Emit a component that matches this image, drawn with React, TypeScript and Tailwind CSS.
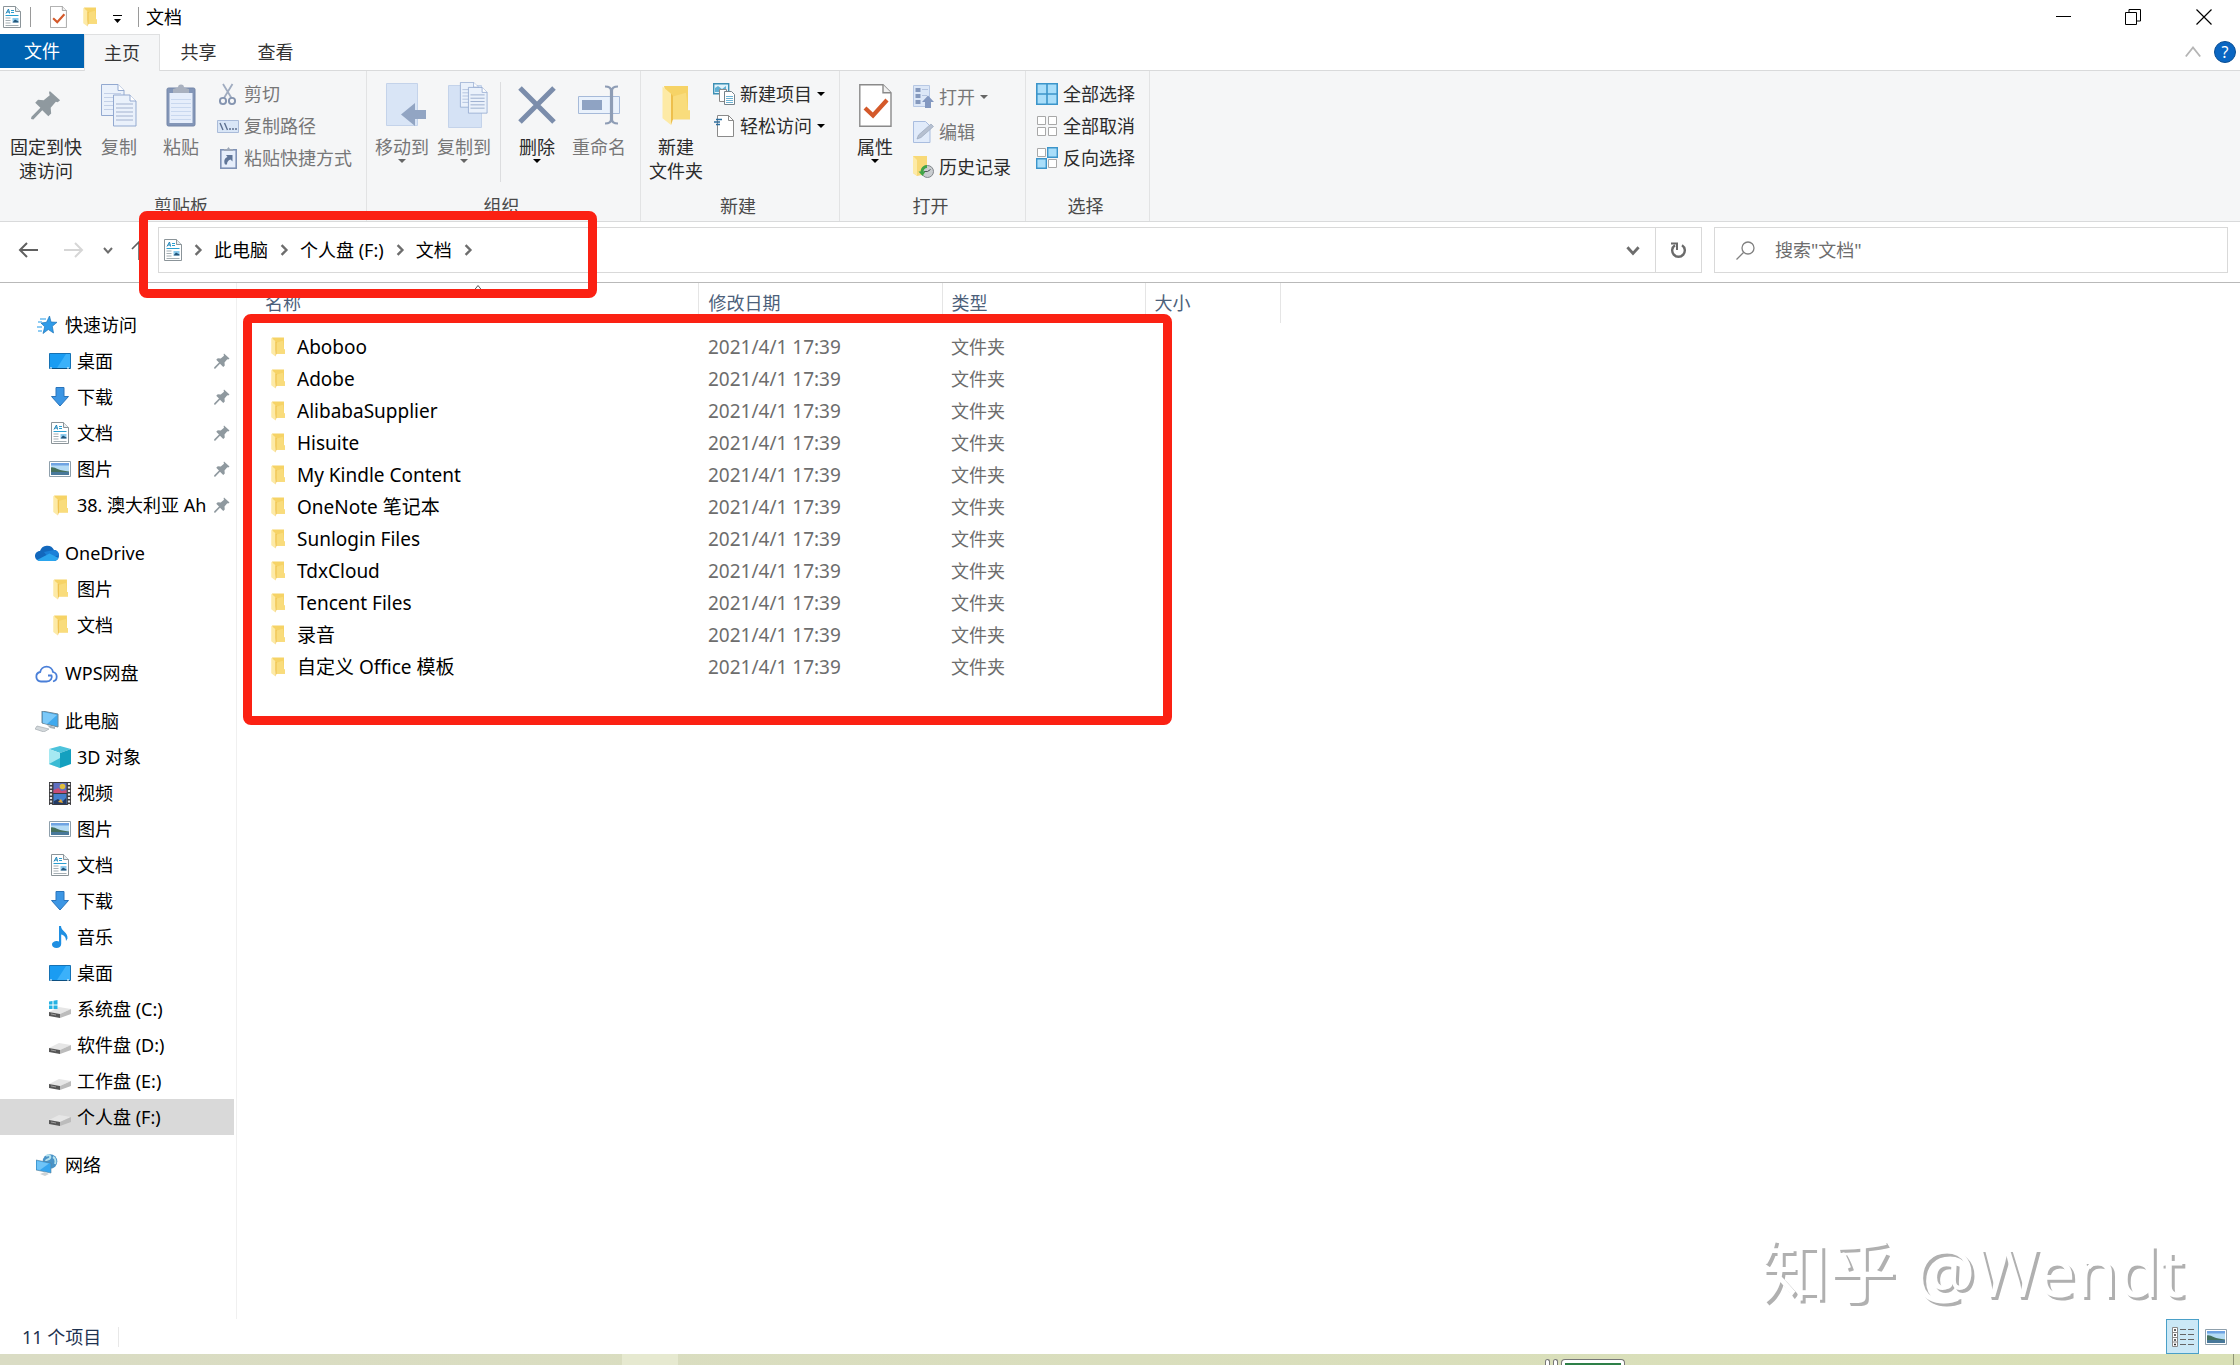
import type { ReactNode } from "react";
import clsx from "clsx";

type IconProps = { className?: string };

/* ---------- icons ---------- */

function DocIcon({ className }: IconProps) {
  return (
    <svg viewBox="0 0 18 22" className={clsx("w-[18px] h-[22px]", className)}>
      <path d="M.5.5h12l5 5v16H.5z" fill="#fff" stroke="#8b9499" />
      <path d="M12.500.5v5h5" fill="#e8edf0" stroke="#8b9499" />
      <path d="M3 7.500 5.500 3 6.500 7.500M4 6h2.500" fill="none" stroke="#1b83b8" />
      <path d="M8 4.500h3M8 6.500h3M2.500 9.500h13" stroke="#2a9fd0" />
      <path d="M2.500 12h5M2.500 14.500h5M2.500 17h5M2.500 19.500h13" stroke="#a5afb4" />
      <path d="M9.500 12h6v4.500h-6z" fill="#8ccbed" />
      <path d="m9.500 16.500 2.500-3 3.500 2v1z" fill="#24567a" />
    </svg>
  );
}

function CheckDocIcon({ className }: IconProps) {
  return (
    <svg viewBox="0 0 33 43" className={className}>
      <path d="M.8.8H24l8 8v33.400H.8z" fill="#fff" stroke="#8a8a8a" strokeWidth="1.400" />
      <path d="M24 .8v8h8" fill="#f0f0f0" stroke="#8a8a8a" strokeWidth="1.400" />
      <path d="m6 24 8 7.500L28 16" fill="none" stroke="#d4592a" strokeWidth="4.200" />
    </svg>
  );
}

function FolderIcon({ className }: IconProps) {
  return (
    <svg viewBox="0 0 28 42" preserveAspectRatio="none" className={className}>
      <path d="M2 1h24v25h2v9H10z" fill="#f6d366" />
      <path d="M10 12 24 8l2 18h2v9H10z" fill="#f9dc7c" />
      <path d="M.5 1.500 9 9v32L.5 34z" fill="#fdeaa6" />
      <path d="M9 9v32l2-6V11z" fill="#eebf4c" />
    </svg>
  );
}

function PinIcon({ className }: IconProps) {
  return (
    <svg viewBox="0 0 32 32" className={className}>
      <path
        d="M20 1 31 11l-2.500 2-2-.5-5.500 6.500.5 6-3 3-6.500-6.500L2.500 31.500 0 31l.5-2.500L10 19 4.500 13.500l3-3 6 .5L20 5.500l-.8-2.700z"
        fill="#8f999f"
      />
    </svg>
  );
}

function PageShape({ x, y, line }: { x: number; y: number; line: string }) {
  return (
    <g transform={`translate(${x} ${y})`}>
      <path d="M.5.5H17l6 6v25H.5z" fill="#eaf1fb" stroke="#93a9d0" />
      <path d="M17 .5v6h6" fill="#fff" stroke="#93a9d0" />
      <path d="M3 9.500h17M3 13.500h17M3 17.500h17M3 21.500h17M3 25.500h17" stroke={line} />
    </g>
  );
}

function CopyIcon() {
  return (
    <svg viewBox="0 0 36 43" className="w-[36px] h-[43px]">
      <PageShape x={0} y={0} line="#c3d0e8" />
      <PageShape x={12} y={10.500} line="#a3b2cf" />
    </svg>
  );
}

function ClipboardIcon() {
  return (
    <svg viewBox="0 0 30 43" className="w-[30px] h-[43px]">
      <rect x="1" y="4" width="28" height="38" rx="1.500" fill="#8396b8" stroke="#7486a8" />
      <path d="M3.500 9h23v30h-23z" fill="#e6eefb" />
      <path d="M5 15.500h20M5 19.500h20M5 23.500h20M5 27.500h20M5 31.500h20M5 35.500h20" stroke="#c9d8ef" />
      <path d="M7 9V5l5-1.500a3 3 0 0 1 6 0L23 5v4z" fill="#a9b1bf" />
    </svg>
  );
}

function ScissorsIcon() {
  return (
    <svg viewBox="0 0 18 23" className="w-[18px] h-[23px]">
      <path d="M4 1 12.500 15M13.500 1 5 15" stroke="#a0acc0" strokeWidth="1.800" />
      <circle cx="4" cy="18" r="3.100" fill="none" stroke="#8494b0" strokeWidth="1.900" />
      <circle cx="13" cy="18" r="3.100" fill="none" stroke="#8494b0" strokeWidth="1.900" />
    </svg>
  );
}

function PathIcon() {
  return (
    <svg viewBox="0 0 22 13" className="w-[22px] h-[13px]">
      <path d="M.5.5h21v12H.5z" fill="#d9e6f7" stroke="#a9bbd9" />
      <path d="m3 3 3 7M7.500 3l3 7" stroke="#5d7090" strokeWidth="1.400" />
      <path d="M12 9h2M15 9h2M18 9h2" stroke="#5d7090" strokeWidth="1.500" />
    </svg>
  );
}

function PasteShortcutIcon() {
  return (
    <svg viewBox="0 0 17 22" className="w-[17px] h-[22px]">
      <rect x=".8" y="2.800" width="15.400" height="18.400" fill="#e6eefb" stroke="#7f92b6" strokeWidth="1.600" />
      <path d="M4 4V2h3l1.500-2L10 2h3v2z" fill="#9da7b8" />
      <path d="M5 17.500c-1.500-3.500-.5-6.500 2.500-7.500L6 8h6.500v6.500L10.500 12.500C8 13.500 7 15 7 17.500z" fill="#5f7598" />
    </svg>
  );
}

function MoveToIcon() {
  return (
    <svg viewBox="-8 0 48 44" className="w-[48px] h-[44px]">
      <path d="M.5.5h31v42H.5z" fill="#d9e5f6" stroke="#c4d3ea" />
      <path d="M40 27H29v-7L15 31.500 29 43v-7h11z" fill="#92a5c3" />
    </svg>
  );
}

function CopyToIcon() {
  return (
    <svg viewBox="-8 0 48 46" className="w-[48px] h-[46px]">
      <path d="M.5 3.500h33v42H.5z" fill="#d5e2f5" stroke="#c4d3ea" />
      <g transform="translate(12 0) scale(.8)">
        <PageShape x={0} y={0} line="#a9bbdb" />
      </g>
      <g transform="translate(20 5) scale(.83)">
        <PageShape x={0} y={0} line="#8fa3c8" />
      </g>
    </svg>
  );
}

function DeleteIcon() {
  return (
    <svg viewBox="0 0 38 38" className="w-[38px] h-[38px]">
      <path d="m2 2 34 34M36 2 2 36" stroke="#7b8dab" strokeWidth="5" />
    </svg>
  );
}

function RenameIcon() {
  return (
    <svg viewBox="0 0 42 40" className="w-[42px] h-[40px]">
      <path d="M.5 11.500h41v17H.5z" fill="#eaf2fc" stroke="#a6bad9" />
      <path d="M4 15h20v10H4z" fill="#8fa3c3" />
      <path d="M27 1.500c4 0 6 1 6 4v29c0 3-2 4-6 4M40 1.500c-4 0-6 1-6 4v29c0 3 2 4 6 4" fill="none" stroke="#8e9db5" strokeWidth="2.200" />
    </svg>
  );
}

function NewItemIcon() {
  return (
    <svg viewBox="0 0 22 22" className="w-[22px] h-[22px]">
      <path d="M.7.7h15v10H.7z" fill="#dff2fb" stroke="#3c8fb4" strokeWidth="1.400" />
      <path d="M2 9V5l3-2 4 3 4-3v6z" fill="#5fb0d4" />
      <path d="M6.500 6.500h7v12h-7z" fill="#fff" stroke="#8a8a8a" />
      <path d="M11.500 8.500h7l3 3v10h-10z" fill="#fff" stroke="#76828a" />
      <path d="M13 13.500h7M13 15.500h7M13 17.500h7M13 19.500h7" stroke="#6db3d3" />
    </svg>
  );
}

function EasyAccessIcon() {
  return (
    <svg viewBox="0 0 20 22" className="w-[20px] h-[22px]">
      <path d="M3.500.5h11l5 5v16h-16z" fill="#fff" stroke="#8a8a8a" />
      <path d="M14.500.5v5h5" fill="none" stroke="#8a8a8a" />
      <path d="M2 4.500h6M0 7h6M2 9.500h4" stroke="#2c6e9e" strokeWidth="1.400" />
    </svg>
  );
}

function OpenIcon() {
  return (
    <svg viewBox="0 0 21 23" className="w-[21px] h-[23px]">
      <path d="M.5.5h16v21H.5z" fill="#dce7f7" stroke="#b7c8e4" />
      <path d="M2.500 3h5v4h-5zM2.500 9h5v4h-5zM2.500 15h5v4h-5z" fill="#8599bd" />
      <path d="M9 4.500h6M9 10.500h5" stroke="#b3c3df" />
      <path d="M12 23v-6H9l6-6.500 6 6.500h-3v6z" fill="#8398c0" />
    </svg>
  );
}

function EditIcon() {
  return (
    <svg viewBox="0 0 21 22" className="w-[21px] h-[22px]">
      <path d="M.5.5h12l4.500 4.500v16.500H.5z" fill="#e1ebfa" stroke="#a9bddf" />
      <path d="m4 18 1.500-4L18 3l2.500 2.500L8 16.500z" fill="#b6c0d0" stroke="#9aa7bd" strokeWidth=".7" />
    </svg>
  );
}

function HistoryIcon() {
  return (
    <svg viewBox="0 0 21 22" className="w-[21px] h-[22px]">
      <path d="M0 0h14v18L4 20 0 17z" fill="#f8d977" />
      <path d="m0 0 4 4v16l-4-3z" fill="#fdeaa6" />
      <circle cx="14.500" cy="15.500" r="6" fill="#c9cdd0" stroke="#80868a" />
      <path d="M11 15.500h3.500l3-2" fill="none" stroke="#4d5459" />
      <path d="M14 9a6.500 6.500 0 0 0-6.500 6.500H5.500l4 4.500 3-4.500h-2A4 4 0 0 1 14 12z" fill="#3fa447" />
    </svg>
  );
}

function SelectAllIcon() {
  return (
    <svg viewBox="0 0 22 22" className="w-[22px] h-[22px]">
      <path d="M.8.8h20.400v20.400H.8zM11 1v20M1 11h20" fill="#a9defa" stroke="#3c95ca" strokeWidth="1.600" />
    </svg>
  );
}

function SelectNoneIcon() {
  return (
    <svg viewBox="0 0 22 22" className="w-[22px] h-[22px]">
      <path d="M1.500 1.500h8v8h-8zM12.500 1.500h8v8h-8zM1.500 12.500h8v8h-8zM12.500 12.500h8v8h-8z" fill="#fff" stroke="#a8a8a8" />
    </svg>
  );
}

function InvertIcon() {
  return (
    <svg viewBox="0 0 22 22" className="w-[22px] h-[22px]">
      <path d="M1.500 1.500h8v8h-8zM12.500 12.500h8v8h-8z" fill="#fff" stroke="#a8a8a8" />
      <path d="M11.700.7h9.600v9.600h-9.600zM.7 11.700h9.600v9.600H.7z" fill="#a9defa" stroke="#3c95ca" strokeWidth="1.400" />
    </svg>
  );
}

function StarIcon() {
  return (
    <svg viewBox="-2 0 20 18" className="w-[20px] h-[18px]">
      <path d="m10.500 0 1.500 6 6 .3-4.700 4L14.500 17l-5.200-3.500-5.300 4 1.700-6.700L2 7l5.500-.7z" fill="#2f9be8" stroke="#1d74b8" strokeWidth=".7" />
      <path d="M1 3h6M-1 6h4M-2 11h5M-1 15h4" stroke="#6bbcf0" strokeWidth="1.300" />
    </svg>
  );
}

function DesktopIcon() {
  return (
    <svg viewBox="0 0 22 17" className="w-[22px] h-[17px]">
      <path d="M.5.5h21v15H.5z" fill="#1a9cf2" stroke="#1672b4" />
      <path d="m8 15 9-14h4v14z" fill="#3bb1fa" />
      <path d="M1 15.500h20" stroke="#0d4f80" />
      <path d="M1 15h2M18 15h2" stroke="#fff" />
    </svg>
  );
}

function DownloadIcon() {
  return (
    <svg viewBox="0 0 18 20" className="w-[18px] h-[20px]">
      <path d="M5 .5h8v9h4.500L9 19 .5 9.500H5z" fill="#3c96e4" stroke="#2a74bb" />
    </svg>
  );
}

function PictureIcon() {
  return (
    <svg viewBox="0 0 22 16" className="w-[22px] h-[16px]">
      <path d="M.5.5h21v15H.5z" fill="#fff" stroke="#8fa0ac" />
      <path d="M2 2h18v12H2z" fill="#b4dbf5" />
      <path d="M2 2h18v2.500H2z" fill="#6fa3e2" />
      <path d="M2 6.500c4-1 7 3.500 18 4v1H2z" fill="#45705d" />
      <path d="M2 11h18v3H2z" fill="#48789a" />
    </svg>
  );
}

function OneDriveIcon() {
  return (
    <svg viewBox="0 0 24 16" className="w-[24px] h-[16px]">
      <path d="M5 6a7.500 7.500 0 0 1 14-1c3 0 5 2.500 5 5.500S22 16 19 16H5.500C2 16 0 13.500 0 11s2-5 5-5" fill="#1268bd" />
      <path d="m9 7 10-2c3 0 5 2.500 5 5.500L13 12z" fill="#1a80d8" />
      <path d="M2 15 14.500 8.500 23.500 13C22.500 15 21 16 19 16H5.500C4 16 3 15.500 2 15" fill="#2aa5ee" />
    </svg>
  );
}

function WpsIcon() {
  return (
    <svg viewBox="0 0 24 19" className="w-[24px] h-[19px]">
      <path
        d="M13 11.500h3.500c1 2-.5 6-5 6H6a4.800 4.800 0 0 1-.8-9.500 6.500 6.500 0 0 1 12.800 0 4.900 4.900 0 0 1 0 9.500"
        fill="none"
        stroke="#4a7fd8"
        strokeWidth="1.800"
      />
    </svg>
  );
}

function ComputerIcon() {
  return (
    <svg viewBox="0 0 24 21" className="w-[24px] h-[21px]">
      <path d="m7 0 16 3v13L7 12z" fill="#3fa9ee" stroke="#6e8796" />
      <path d="m8 1 14 3-10 9-4-1z" fill="#7cc9f8" />
      <path d="m2 15 12 3-5 3-9-3z" fill="#d3d8db" stroke="#9aa3a8" strokeWidth=".6" />
      <path d="m12 14 8 2v2l-5-1z" fill="#a8b1b6" />
    </svg>
  );
}

function CubeIcon() {
  return (
    <svg viewBox="0 0 22 22" className="w-[22px] h-[22px]">
      <path d="m0 3 11-3 11 3-11 4z" fill="#4dc3dc" />
      <path d="m0 3 11 4v15L0 18z" fill="#a5e9f2" />
      <path d="m22 3-11 4v15l11-4z" fill="#14a0bf" />
      <path d="m0 18 11-6v10z" fill="#3bbbd4" />
    </svg>
  );
}

function VideoIcon() {
  return (
    <svg viewBox="0 0 22 23" className="w-[22px] h-[23px]">
      <path d="M0 0h22v23H0z" fill="#3b3b3f" />
      <path d="M4.500 1h13v10h-13z" fill="#5f6fc0" />
      <path d="M4.500 12h13v10h-13z" fill="#4480cc" />
      <path d="m4.500 8 5-2 3 3 5-1v3h-13z" fill="#c74d76" />
      <circle cx="13.500" cy="4.500" r="2.800" fill="#dfbd3c" />
      <path d="m5 19 4-2 4 3 4-4v6H5z" fill="#243a62" />
      <path d="m9 20 3-3 2 4z" fill="#e6a732" />
      <path d="M2 1v22M20 1v22" stroke="#e6e6e6" strokeWidth="2.200" strokeDasharray="2 1.500" />
    </svg>
  );
}

function MusicIcon() {
  return (
    <svg viewBox="0 0 16 22" className="w-[16px] h-[22px]">
      <path d="M7 0h2c0 5 7 6 6.500 12.500L14 15c0-4-2-6-4.800-6.500V18c0 2.500-2.200 4-4.700 4S0 20.500 0 18.500 2.500 15 5 15l2 .5z" fill="#1f8fe2" />
    </svg>
  );
}

function DriveIcon({ system }: { system?: boolean }) {
  return (
    <svg viewBox="0 0 22 18" className="w-[22px] h-[18px]">
      <path d="m0 12 10-5 12 2-11 5z" fill="#e6e6e6" />
      <path d="M22 9v5l-11 4v-4z" fill="#bcbcbc" />
      <path d="m0 12 11 2v4L0 16z" fill="#565656" />
      <path d="m2 14 5 1" stroke="#9c9c9c" />
      {system && <path d="M0 1.500 3.500 1v3.500H0zM4.500.8 8.500 0v4.500h-4zM0 5.500h3.500V9H0zM4.500 5.500h4V9h-4z" fill="#25b2e2" />}
    </svg>
  );
}

function NetworkIcon() {
  return (
    <svg viewBox="0 0 22 22" className="w-[22px] h-[22px]">
      <circle cx="14" cy="7.500" r="7.300" fill="#4a93c7" />
      <path d="M10 2c3-2 5 0 4 2s-4 1-4 3M17 3c2 1 3 4 2 7" fill="none" stroke="#b4e1ee" strokeWidth="2" />
      <path d="m0 6 15 3v10L0 16z" fill="#36a5ee" stroke="#5a8199" strokeWidth=".6" />
      <path d="m1 7 12 2.500L4 16l-3-.6z" fill="#6fc4f7" />
      <path d="m4 20 5-2 4 2-4 2z" fill="#cdd3d6" />
    </svg>
  );
}

function Chevron({ d, className = "w-[10px] h-[10px]", stroke = "#6d6d6d", width = 2 }: { d: "up" | "down" | "right"; className?: string; stroke?: string; width?: number }) {
  const paths = { up: "M1 7.500 5 2.500l4 5", down: "m1 3 4 4.500L9 3", right: "m3 1 4 4-4 4" };
  return (
    <svg viewBox="0 0 10 10" className={className} fill="none" stroke={stroke} strokeWidth={width}>
      <path d={paths[d]} />
    </svg>
  );
}

function Caret({ className }: IconProps) {
  return (
    <svg viewBox="0 0 8 4" className={clsx("w-[8px] h-[4px]", className)}>
      <path d="M0 0h8L4 4z" fill="currentColor" />
    </svg>
  );
}

/* ---------- ribbon ---------- */

function BigButton({ icon, lines, disabled, caret, className = "w-[62px]" }: { icon: ReactNode; lines: string[]; disabled?: boolean; caret?: boolean; className?: string }) {
  return (
    <button
      type="button"
      disabled={disabled}
      className={clsx("flex flex-col items-center", disabled ? "text-[#777]" : "text-[#2b2b2b]", className)}
    >
      <span className="h-[60px] flex items-center">{icon}</span>
      {lines.map((line) => (
        <span key={line} className="leading-6 whitespace-nowrap">
          {line}
        </span>
      ))}
      {caret && <Caret className={disabled ? "text-[#666]" : "text-black"} />}
    </button>
  );
}

function SmallButton({ icon, label, disabled, caret, className = "h-8" }: { icon: ReactNode; label: string; disabled?: boolean; caret?: boolean; className?: string }) {
  return (
    <button
      type="button"
      disabled={disabled}
      className={clsx("flex items-center gap-[5px] whitespace-nowrap", disabled ? "text-[#777]" : "text-[#2b2b2b]", className)}
    >
      <span className="w-[22px] flex justify-center">{icon}</span>
      {label}
      {caret && <Caret className={disabled ? "text-[#666]" : "text-black"} />}
    </button>
  );
}

function RibbonGroup({ label, className, children }: { label: string; className: string; children: ReactNode }) {
  return (
    <section className={clsx("flex flex-col justify-between border-r border-[#e2e3e4] pb-[3px] shrink-0", className)}>
      <div className="flex items-start pt-1 pl-1">{children}</div>
      <h2 className="text-center leading-6 pr-1 text-[#4a4a4a]">{label}</h2>
    </section>
  );
}

function Ribbon() {
  return (
    <div className="flex h-[151px] bg-[#f5f6f7] border-b border-[#d9dadb]">
      <RibbonGroup label="剪贴板" className="w-[367px]">
        <BigButton className="w-[84px]" icon={<PinIcon className="w-[30px] h-[30px]" />} lines={["固定到快", "速访问"]} />
        <BigButton icon={<CopyIcon />} lines={["复制"]} disabled />
        <BigButton icon={<ClipboardIcon />} lines={["粘贴"]} disabled />
        <div className="pt-[3px] pl-[5px]">
          <SmallButton icon={<ScissorsIcon />} label="剪切" disabled />
          <SmallButton icon={<PathIcon />} label="复制路径" disabled />
          <SmallButton icon={<PasteShortcutIcon />} label="粘贴快捷方式" disabled />
        </div>
      </RibbonGroup>
      <RibbonGroup label="组织" className="w-[274px]">
        <BigButton icon={<MoveToIcon />} lines={["移动到"]} disabled caret />
        <BigButton icon={<CopyToIcon />} lines={["复制到"]} disabled caret />
        <div className="w-px h-[100px] mt-[7px] mx-[5px] bg-[#dcdddf]" />
        <BigButton icon={<DeleteIcon />} lines={["删除"]} caret />
        <BigButton icon={<RenameIcon />} lines={["重命名"]} disabled />
      </RibbonGroup>
      <RibbonGroup label="新建" className="w-[199px]">
        <BigButton icon={<FolderIcon className="w-[28px] h-[41px]" />} lines={["新建", "文件夹"]} />
        <div className="pt-[3px] pl-[6px]">
          <SmallButton icon={<NewItemIcon />} label="新建项目" caret />
          <SmallButton icon={<EasyAccessIcon />} label="轻松访问" caret />
        </div>
      </RibbonGroup>
      <RibbonGroup label="打开" className="w-[186px]">
        <BigButton icon={<CheckDocIcon className="w-[33px] h-[43px]" />} lines={["属性"]} caret />
        <div className="pt-[4px] pl-[6px]">
          <SmallButton className="h-[35px]" icon={<OpenIcon />} label="打开" disabled caret />
          <SmallButton className="h-[35px]" icon={<EditIcon />} label="编辑" disabled />
          <SmallButton className="h-[35px]" icon={<HistoryIcon />} label="历史记录" />
        </div>
      </RibbonGroup>
      <RibbonGroup label="选择" className="w-[124px]">
        <div className="pt-[3px] pl-[6px]">
          <SmallButton icon={<SelectAllIcon />} label="全部选择" />
          <SmallButton icon={<SelectNoneIcon />} label="全部取消" />
          <SmallButton icon={<InvertIcon />} label="反向选择" />
        </div>
      </RibbonGroup>
    </div>
  );
}

/* ---------- title bar and address bar ---------- */

function TitleBar() {
  return (
    <header className="flex items-center h-[34px] pl-[3px]">
      <DocIcon />
      <span className="w-px h-5 ml-[9px] mr-[19px] bg-[#9a9a9a]" />
      <button type="button" aria-label="属性">
        <CheckDocIcon className="w-[17px] h-[22px]" />
      </button>
      <button type="button" aria-label="新建文件夹" className="ml-4">
        <FolderIcon className="w-[14px] h-[20px]" />
      </button>
      <button type="button" aria-label="自定义快速访问工具栏" className="ml-4 pt-1">
        <svg viewBox="0 0 9 8" className="w-[9px] h-[8px]">
          <path d="M0 .5h9" stroke="#000" />
          <path d="M1 4h7L4.500 8z" />
        </svg>
      </button>
      <span className="w-px h-5 ml-4 mr-[7px] bg-[#9a9a9a]" />
      <h1 className="text-black">文档</h1>
      <div className="flex ml-auto h-full pr-px">
        <button type="button" aria-label="最小化" className="w-[70px] flex items-center justify-center">
          <svg viewBox="0 0 15 15" className="w-[15px] h-[15px]" fill="none" stroke="#000">
            <path d="M0 6.500h15" />
          </svg>
        </button>
        <button type="button" aria-label="还原" className="w-[70px] flex items-center justify-center">
          <svg viewBox="0 0 16 16" className="w-[16px] h-[16px]" fill="none" stroke="#000">
            <path d="M.5 3.500h11v12H.5zM4 3V.5h11.500v11.500H12" />
          </svg>
        </button>
        <button type="button" aria-label="关闭" className="w-[71px] flex items-center justify-center">
          <svg viewBox="0 0 16 16" className="w-[16px] h-[16px]" fill="none" stroke="#000" strokeWidth="1.200">
            <path d="m.5.5 15 15M15.500.5l-15 15" />
          </svg>
        </button>
      </div>
    </header>
  );
}

function Tabs() {
  return (
    <div className="flex h-[37px] border-b border-[#d9dadb] text-[#333]">
      <button type="button" className="w-[84px] h-[34px] bg-[#0063b1] text-white">
        文件
      </button>
      <button type="button" className="w-[76px] h-[37px] bg-[#f5f6f7] border border-b-0 border-[#dfe0e1]">
        主页
      </button>
      <button type="button" className="w-[77px]">
        共享
      </button>
      <button type="button" className="w-[77px]">
        查看
      </button>
      <div className="flex items-center gap-3 ml-auto pr-1">
        <button type="button" aria-label="最小化功能区">
          <Chevron d="up" className="w-[18px] h-[18px]" stroke="#b5b5b5" width={1} />
        </button>
        <button type="button" aria-label="帮助" className="w-[22px] h-[22px] rounded-full bg-[#0a66c2] border border-[#0b4f94] text-white text-[16px] leading-5">
          ?
        </button>
      </div>
    </div>
  );
}

function AddressBar() {
  return (
    <div className="flex items-center h-[61px] pb-[4px] pr-3 border-b border-[#b9b9b9]">
      <div className="flex items-center w-[158px] shrink-0 pl-[18px]">
        <button type="button" aria-label="返回">
          <svg viewBox="0 0 20 16" className="w-[20px] h-[16px]" fill="none" stroke="#606060" strokeWidth="2">
            <path d="M20 8H2M9 1 2 8l7 7" />
          </svg>
        </button>
        <button type="button" aria-label="前进" disabled className="ml-[26px]">
          <svg viewBox="0 0 20 16" className="w-[20px] h-[16px]" fill="none" stroke="#d6d6d6" strokeWidth="2">
            <path d="M0 8h18M11 1l7 7-7 7" />
          </svg>
        </button>
        <button type="button" aria-label="最近浏览的位置" className="ml-[19px]">
          <Chevron d="down" />
        </button>
        <button type="button" aria-label="上移" className="ml-[18px]">
          <svg viewBox="0 0 16 20" className="w-[16px] h-[20px]" fill="none" stroke="#606060" strokeWidth="1.600">
            <path d="M8 20V2M1 9l7-7 7 7" />
          </svg>
        </button>
      </div>
      <div className="flex flex-1 items-center h-[46px] border border-[#d9d9d9] pl-[5px] text-black">
        <DocIcon />
        <Chevron d="right" className="w-[12px] h-[12px] ml-[10px] mr-[10px]" />
        <button type="button">此电脑</button>
        <Chevron d="right" className="w-[12px] h-[12px] ml-[10px] mr-[10px]" />
        <button type="button">个人盘 (F:)</button>
        <Chevron d="right" className="w-[12px] h-[12px] ml-[10px] mr-[10px]" />
        <button type="button">文档</button>
        <Chevron d="right" className="w-[12px] h-[12px] ml-[10px]" />
        <button type="button" aria-label="以前的位置" className="ml-auto mr-[15px]">
          <Chevron d="down" className="w-[14px] h-[14px]" />
        </button>
        <button type="button" aria-label="刷新" className="w-[46px] h-full border-l border-[#d9d9d9] flex items-center justify-center">
          <svg viewBox="0 0 17 17" className="w-[17px] h-[17px]" fill="none" stroke="#6a6a6a" strokeWidth="2.400">
            <path d="M12 3.200a6.300 6.300 0 1 1-7 0" />
            <path d="M1 1.500h6V8" strokeWidth="2" />
          </svg>
        </button>
      </div>
      <label className="flex items-center w-[514px] h-[46px] ml-3 pl-[21px] border border-[#d9d9d9]">
        <svg viewBox="0 0 19 19" className="w-[19px] h-[19px]" fill="none" stroke="#808080" strokeWidth="1.300">
          <circle cx="12" cy="7" r="6" />
          <path d="M7.500 11.500.5 18.500" />
        </svg>
        <input type="text" aria-label="搜索" placeholder={'搜索"文档"'} className="flex-1 ml-5 outline-none placeholder:text-[#6d6d6d]" />
      </label>
    </div>
  );
}

/* ---------- navigation pane ---------- */

type NavItem = { label: string; icon: ReactNode; pinned?: boolean; selected?: boolean };
type NavSection = { root: NavItem; items: NavItem[] };

const smallFolder = <FolderIcon className="w-[15px] h-[21px]" />;

const sections: NavSection[] = [
  {
    root: { label: "快速访问", icon: <StarIcon /> },
    items: [
      { label: "桌面", icon: <DesktopIcon />, pinned: true },
      { label: "下载", icon: <DownloadIcon />, pinned: true },
      { label: "文档", icon: <DocIcon />, pinned: true },
      { label: "图片", icon: <PictureIcon />, pinned: true },
      { label: "38. 澳大利亚 Ah", icon: smallFolder, pinned: true },
    ],
  },
  {
    root: { label: "OneDrive", icon: <OneDriveIcon /> },
    items: [
      { label: "图片", icon: smallFolder },
      { label: "文档", icon: smallFolder },
    ],
  },
  { root: { label: "WPS网盘", icon: <WpsIcon /> }, items: [] },
  {
    root: { label: "此电脑", icon: <ComputerIcon /> },
    items: [
      { label: "3D 对象", icon: <CubeIcon /> },
      { label: "视频", icon: <VideoIcon /> },
      { label: "图片", icon: <PictureIcon /> },
      { label: "文档", icon: <DocIcon /> },
      { label: "下载", icon: <DownloadIcon /> },
      { label: "音乐", icon: <MusicIcon /> },
      { label: "桌面", icon: <DesktopIcon /> },
      { label: "系统盘 (C:)", icon: <DriveIcon system /> },
      { label: "软件盘 (D:)", icon: <DriveIcon /> },
      { label: "工作盘 (E:)", icon: <DriveIcon /> },
      { label: "个人盘 (F:)", icon: <DriveIcon />, selected: true },
    ],
  },
  { root: { label: "网络", icon: <NetworkIcon /> }, items: [] },
];

function NavRow({ item, root }: { item: NavItem; root?: boolean }) {
  return (
    <a
      href="#"
      className={clsx(
        "flex items-center gap-[6px] h-9 mr-[2px] pr-[4px] whitespace-nowrap text-black",
        root ? "pl-[35px]" : "pl-[49px]",
        item.selected && "bg-[#d9d9d9]"
      )}
    >
      <span className={clsx("flex justify-center shrink-0", root ? "w-[24px]" : "w-[22px]")}>{item.icon}</span>
      <span className="flex-1 overflow-hidden">{item.label}</span>
      {item.pinned && <PinIcon className="w-[16px] h-[16px] shrink-0" />}
    </a>
  );
}

function NavPane() {
  return (
    <nav className="w-[237px] shrink-0 border-r border-[#f0f0f0] pt-6 space-y-3">
      {sections.map((section) => (
        <div key={section.root.label}>
          <NavRow item={section.root} root />
          {section.items.map((item) => (
            <NavRow key={item.label} item={item} />
          ))}
        </div>
      ))}
    </nav>
  );
}

/* ---------- file list ---------- */

const folders = [
  "Aboboo",
  "Adobe",
  "AlibabaSupplier",
  "Hisuite",
  "My Kindle Content",
  "OneNote 笔记本",
  "Sunlogin Files",
  "TdxCloud",
  "Tencent Files",
  "录音",
  "自定义 Office 模板",
];

function FileList() {
  return (
    <table className="self-start table-fixed w-[1043px] text-left">
      <thead>
        <tr className="h-10 text-[#4c607a]">
          <th className="relative w-[461px] pl-7 font-normal border-r border-[#e5e5e5]">
            名称
            <Chevron d="up" className="absolute left-[234px] top-0 w-[14px] h-[10px]" stroke="#555" width={1} />
          </th>
          <th className="w-[244px] pl-[10px] font-normal border-r border-[#e5e5e5]">修改日期</th>
          <th className="w-[203px] pl-[9px] font-normal border-r border-[#e5e5e5]">类型</th>
          <th className="w-[135px] pl-[9px] font-normal border-r border-[#e5e5e5]">大小</th>
        </tr>
      </thead>
      <tbody className="before:block before:h-2 text-[#6d6d6d]">
        {folders.map((name) => (
          <tr key={name} className="h-8">
            <td className="pl-[34px] text-[19px] text-black">
              <span className="flex items-center gap-3">
                <FolderIcon className="w-[14px] h-[20px]" />
                {name}
              </span>
            </td>
            <td className="pl-[10px] text-[19px]">2021/4/1 17:39</td>
            <td className="pl-[9px]">文件夹</td>
            <td />
          </tr>
        ))}
      </tbody>
    </table>
  );
}

function StatusBar() {
  return (
    <footer className="flex items-center h-[35px] pl-[22px] pr-[13px] text-[#1e3250]">
      <span>11 个项目</span>
      <span className="w-px h-5 ml-[17px] bg-[#e8e8e8]" />
      <button type="button" aria-label="详细信息" className="ml-auto w-[33px] h-[35px] bg-[#cbe8f6] border border-[#4aa0c8] flex items-center justify-center">
        <svg viewBox="0 0 22 20" className="w-[22px] h-[20px]" fill="none">
          <path d="M.5.5h5v19h-5zM.5 5.500h5M.5 10.500h5M.5 15h5" fill="#fff" stroke="#888" />
          <path d="M2 3h2M2 8h2M2 13h2M2 17.500h2" stroke="#333" strokeWidth="1.500" />
          <path d="M8 2.500h6M16 2.500h6M8 7.500h6M16 7.500h6M8 12.500h6M16 12.500h6M8 17.500h6M16 17.500h6" stroke="#666" />
        </svg>
      </button>
      <button type="button" aria-label="大图标" className="ml-[6px]">
        <PictureIcon />
      </button>
    </footer>
  );
}

/* Sliver of the desktop wallpaper under the window */
function DesktopEdge() {
  return (
    <div className="flex items-end h-[11px] bg-linear-to-r from-[#dadcc4] to-[#d9e0b6]">
      <div className="w-[56px] h-full ml-[622px] bg-[#e6e9d0]" />
      <div className="flex items-end gap-[3px] ml-[867px]">
        <div className="w-[5px] h-[6px] rounded-t bg-white border border-b-0 border-[#777]" />
        <div className="w-[5px] h-[6px] rounded-t bg-white border border-b-0 border-[#777]" />
        <div className="w-[64px] h-[6px] rounded-t bg-white border border-b-0 border-[#777] px-[3px] pt-[3px]">
          <div className="h-[2px] bg-[#2e8048]" />
        </div>
      </div>
      <div className="w-px h-full ml-auto mr-[6px] bg-[#8f9478]" />
    </div>
  );
}

export default function App() {
  return (
    <div className="relative flex flex-col min-h-screen overflow-hidden bg-white text-[18px] leading-6 font-['Noto_Sans','Noto_Sans_CJK_SC',sans-serif]">
      <TitleBar />
      <Tabs />
      <Ribbon />
      <AddressBar />
      <main className="flex flex-1">
        <NavPane />
        <FileList />
      </main>
      <StatusBar />
      <DesktopEdge />

      {/* red marker boxes and watermark drawn over the window */}
      <div className="absolute left-[139px] top-[211px] w-[458px] h-[87px] border-[9px] border-[#fb2113] rounded-lg pointer-events-none" />
      <div className="absolute left-[243px] top-[314px] w-[929px] h-[411px] border-[9px] border-[#fb2113] rounded-lg pointer-events-none" />
      <div className="absolute right-[56px] bottom-[52px] text-[68px] leading-[84px] text-white [text-shadow:3px_3px_0_#b0b0b0] whitespace-nowrap pointer-events-none">
        知乎 @Wendt
      </div>
    </div>
  );
}
